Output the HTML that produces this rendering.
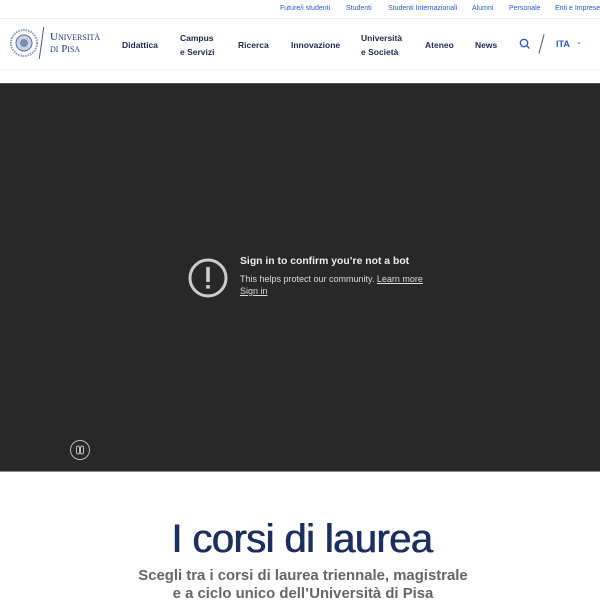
<!DOCTYPE html>
<html><head><meta charset="utf-8"><style>
*{margin:0;padding:0;box-sizing:border-box}
body{width:600px;height:600px;overflow:hidden;background:#fff;font-family:"Liberation Sans",sans-serif;position:relative}
.a{position:absolute;white-space:nowrap}
.top{font-size:7px;color:#2a5bd7;top:5px}
.nav{font-size:8.5px;font-weight:bold;color:#1c2a4a;line-height:14px}
</style></head><body>
<div style="position:absolute;left:0;top:18px;width:600px;height:1px;background:#eee"></div>
<div class="a top" style="left:280px">Future/i studenti</div>
<div class="a top" style="left:346px">Studenti</div>
<div class="a top" style="left:388px">Studenti Internazionali</div>
<div class="a top" style="left:472px">Alumni</div>
<div class="a top" style="left:509px">Personale</div>
<div class="a top" style="left:555px">Enti e Imprese</div>
<svg class="a" style="left:9px;top:28px" width="30" height="30" viewBox="0 0 30 30"><circle cx="15" cy="15" r="13" fill="none" stroke="#8a9ab5" stroke-width="2" stroke-dasharray="1.5 1"/><circle cx="15" cy="15" r="8" fill="#c9d3e3" stroke="#5a6e92"/><circle cx="15" cy="15" r="4" fill="#7b8eb0"/></svg>
<div class="a" style="left:41px;top:27px;width:1px;height:32px;background:#445a80;transform:rotate(8deg)"></div>
<div class="a" style="left:50px;top:31px;font-family:'Liberation Serif',serif;font-size:11px;color:#1c3a70;line-height:12px;font-variant:small-caps">Università<br>di Pisa</div>
<div class="a nav" style="left:122px;top:38px">Didattica</div>
<div class="a nav" style="left:180px;top:31px">Campus<br>e Servizi</div>
<div class="a nav" style="left:238px;top:38px">Ricerca</div>
<div class="a nav" style="left:291px;top:38px">Innovazione</div>
<div class="a nav" style="left:361px;top:31px">Università<br>e Società</div>
<div class="a nav" style="left:425px;top:38px">Ateneo</div>
<div class="a nav" style="left:475px;top:38px">News</div>
<svg class="a" style="left:519px;top:38px" width="12" height="12" viewBox="0 0 12 12"><circle cx="5" cy="5" r="3.7" fill="none" stroke="#2a5bd7" stroke-width="1.3"/><path d="M7.6 7.6L10.5 10.5" stroke="#2a5bd7" stroke-width="1.3"/></svg>
<div class="a" style="left:541px;top:34px;width:1px;height:20px;background:#555;transform:rotate(15deg)"></div>
<div class="a" style="left:556px;top:39px;font-size:9px;font-weight:bold;color:#2a5bd7">ITA</div>
<div class="a" style="left:576px;top:38px;font-size:7px;color:#2a5bd7">&#8964;</div>
<div style="position:absolute;left:0;top:69px;width:600px;height:1px;background:#f3f3f3"></div>
<div style="position:absolute;left:0;top:83px;width:600px;height:389px;background:#282828;border-top:1px solid #555;border-bottom:1px solid #888"></div>
<svg class="a" style="left:188px;top:258px" width="40" height="40" viewBox="0 0 40 40"><circle cx="20" cy="20" r="18" fill="none" stroke="#ccc" stroke-width="3"/><rect x="18.2" y="9" width="3.6" height="15" fill="#ccc"/><rect x="18.2" y="27" width="3.6" height="3.6" fill="#ccc"/></svg>
<div class="a" style="left:240px;top:256px;font-size:10.4px;font-weight:bold;color:#eee">Sign in to confirm you’re not a bot</div>
<div class="a" style="left:240px;top:274px;font-size:9px;color:#ddd">This helps protect our community. <u>Learn more</u></div>
<div class="a" style="left:240px;top:286px;font-size:9px;color:#ddd"><u>Sign in</u></div>
<svg class="a" style="left:69px;top:439px" width="22" height="22" viewBox="0 0 22 22"><circle cx="11" cy="11" r="9.5" fill="none" stroke="#bbb"/><rect x="7.5" y="7" width="3" height="8" rx="1.5" fill="none" stroke="#bbb"/><rect x="11.5" y="7" width="3" height="8" rx="1.5" fill="none" stroke="#bbb"/></svg>
<div class="a" style="left:2px;width:600px;text-align:center;top:517px;font-size:40px;color:#1c2f5e;letter-spacing:-0.6px;text-shadow:0.4px 0 0 #1c2f5e,-0.4px 0 0 #1c2f5e">I corsi di laurea</div>
<div class="a" style="left:3px;width:600px;text-align:center;top:567px;font-size:14.9px;font-weight:bold;color:#666;line-height:18px">Scegli tra i corsi di laurea triennale, magistrale<br>e a ciclo unico dell’Università di Pisa</div>
</body></html>
